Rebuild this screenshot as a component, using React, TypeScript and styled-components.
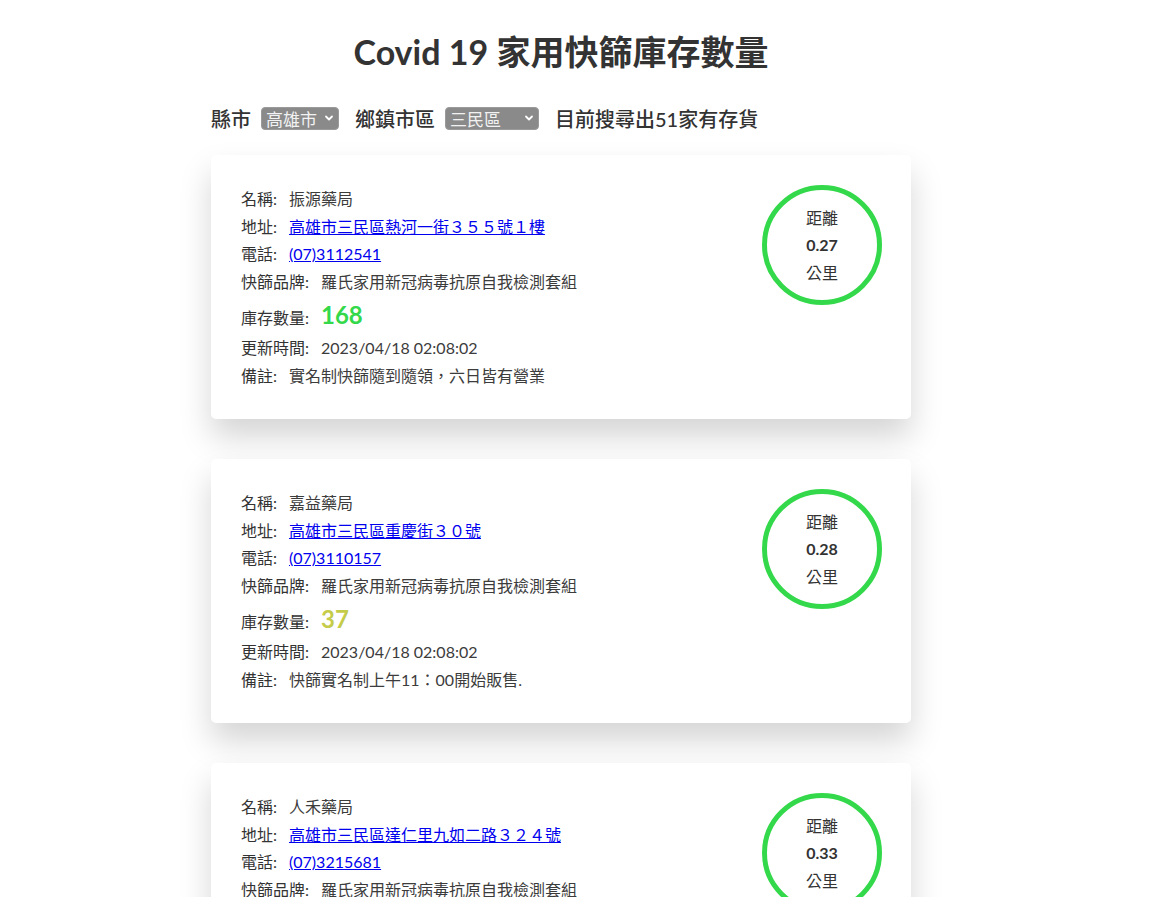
import React from "react";
import styled, { createGlobalStyle } from "styled-components";

const GlobalStyle = createGlobalStyle`
  html, body { margin: 0; padding: 0; background: #ffffff; }
  body {
    font-family: Lato, "Noto Sans CJK TC", "Noto Sans", sans-serif;
    color: #333333;
  }
`;

const Page = styled.div`
  padding: 0 0 40px 211px;
  width: 700px;
`;

const Title = styled.h1`
  margin: 0;
  padding-top: 31px;
  height: 42px;
  line-height: 42px;
  font-size: 34px;
  font-weight: 700;
  text-align: center;
  color: #333333;
`;

const FilterBar = styled.div`
  display: flex;
  align-items: center;
  margin-top: 33px;
  height: 24px;
  font-size: 20px;
  font-weight: 500;
  color: #333333;
`;

const FilterLabel = styled.span`
  margin-right: 10px;
  white-space: nowrap;
`;

const Select = styled.div<{ $w: number }>`
  display: flex;
  align-items: center;
  justify-content: space-between;
  box-sizing: border-box;
  width: ${(p) => p.$w}px;
  height: 23px;
  padding: 0 4px 0 4px;
  margin-right: 16px;
  background: #8a8a8a;
  border: 1px solid #9a9a9a;
  border-radius: 4px;
  color: #f2f2f2;
  font-size: 17px;
  font-weight: 400;
`;

const Chevron = styled.svg`
  width: 10px;
  height: 10px;
  flex-shrink: 0;
`;

const Result = styled.span`
  white-space: nowrap;
`;

const CardList = styled.div`
  display: flex;
  flex-direction: column;
  gap: 40px;
  margin-top: 25px;
`;

const Card = styled.div`
  display: flex;
  justify-content: space-between;
  align-items: flex-start;
  box-sizing: border-box;
  width: 700px;
  padding: 30px 29px 30px 30px;
  background: #ffffff;
  border-radius: 5px;
  box-shadow: 0 18px 32px rgba(0, 0, 0, 0.17);
`;

const Info = styled.div`
  display: flex;
  flex-direction: column;
  font-size: 16px;
`;

const Row = styled.div`
  display: flex;
  align-items: baseline;
  line-height: 27.5px;
  white-space: nowrap;
`;

const Label = styled.span`
  margin-right: 12px;
  color: #333333;
  font-weight: 400;
`;

const Value = styled.span`
  color: #3c3c3c;
`;

const Link = styled.a`
  color: #0000ee;
  text-decoration: underline;
`;

const Stock = styled.span<{ $color: string }>`
  font-size: 24px;
  font-weight: 700;
  line-height: 39px;
  color: ${(p) => p.$color};
`;

const Distance = styled.div`
  box-sizing: border-box;
  width: 120px;
  height: 120px;
  border: 5px solid #33d94a;
  border-radius: 50%;
  display: flex;
  flex-direction: column;
  align-items: center;
  justify-content: center;
  font-size: 16px;
  line-height: 27.5px;
  color: #333333;
`;

const DistanceNum = styled.span`
  font-weight: 700;
`;

type Store = {
  name: string;
  address: string;
  phone: string;
  stock: number;
  color: string;
  note: string;
  distance: string;
};

const stores: Store[] = [
  {
    name: "振源藥局",
    address: "高雄市三民區熱河一街３５５號１樓",
    phone: "(07)3112541",
    stock: 168,
    color: "#33d94a",
    note: "實名制快篩隨到隨領，六日皆有營業",
    distance: "0.27",
  },
  {
    name: "嘉益藥局",
    address: "高雄市三民區重慶街３０號",
    phone: "(07)3110157",
    stock: 37,
    color: "#c5cc4a",
    note: "快篩實名制上午11：00開始販售.",
    distance: "0.28",
  },
  {
    name: "人禾藥局",
    address: "高雄市三民區達仁里九如二路３２４號",
    phone: "(07)3215681",
    stock: 120,
    color: "#33d94a",
    note: "",
    distance: "0.33",
  },
];

const ChevronIcon = () => (
  <Chevron viewBox="0 0 10 10">
    <path d="M2 3.5 L5 6.5 L8 3.5" fill="none" stroke="#ffffff" strokeWidth="1.8" strokeLinecap="round" strokeLinejoin="round" />
  </Chevron>
);

const StoreCard = ({ s }: { s: Store }) => (
  <Card>
    <Info>
      <Row>
        <Label>名稱:</Label>
        <Value>{s.name}</Value>
      </Row>
      <Row>
        <Label>地址:</Label>
        <Link href="#">{s.address}</Link>
      </Row>
      <Row>
        <Label>電話:</Label>
        <Link href="#">{s.phone}</Link>
      </Row>
      <Row>
        <Label>快篩品牌:</Label>
        <Value>羅氏家用新冠病毒抗原自我檢測套組</Value>
      </Row>
      <Row>
        <Label>庫存數量:</Label>
        <Stock $color={s.color}>{s.stock}</Stock>
      </Row>
      <Row>
        <Label>更新時間:</Label>
        <Value>2023/04/18 02:08:02</Value>
      </Row>
      <Row>
        <Label>備註:</Label>
        <Value>{s.note}</Value>
      </Row>
    </Info>
    <Distance>
      <span>距離</span>
      <DistanceNum>{s.distance}</DistanceNum>
      <span>公里</span>
    </Distance>
  </Card>
);

export default function App() {
  return (
    <>
      <GlobalStyle />
      <Page>
        <Title>Covid 19 家用快篩庫存數量</Title>
        <FilterBar>
          <FilterLabel>縣市</FilterLabel>
          <Select $w={78}>
            <span>高雄市</span>
            <ChevronIcon />
          </Select>
          <FilterLabel>鄉鎮市區</FilterLabel>
          <Select $w={94}>
            <span>三民區</span>
            <ChevronIcon />
          </Select>
          <Result>目前搜尋出51家有存貨</Result>
        </FilterBar>
        <CardList>
          {stores.map((s) => (
            <StoreCard key={s.name} s={s} />
          ))}
        </CardList>
      </Page>
    </>
  );
}
